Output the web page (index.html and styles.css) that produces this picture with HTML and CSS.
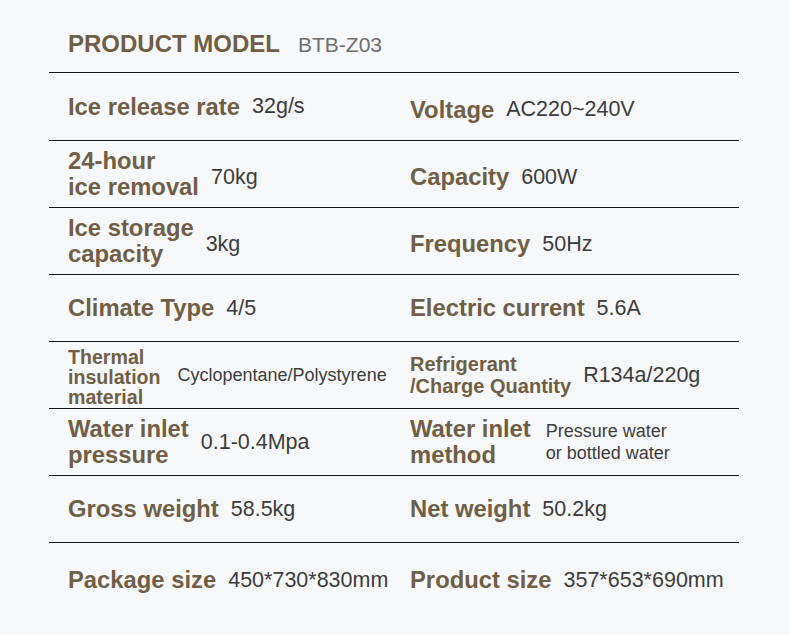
FILE: index.html
```html
<!DOCTYPE html>
<html lang="en">
<head>
<meta charset="utf-8">
<title>Product specifications</title>
<link rel="stylesheet" href="styles.css">
</head>
<body>
<div class="sheet">
  <div class="title">
    <span class="title-label">PRODUCT MODEL</span>
    <span class="title-value">BTB-Z03</span>
  </div>
  <div class="specs">
    <div class="row row-first row-drop">
      <div class="cell"><span class="label">Ice release rate</span><span class="value">32g/s</span></div>
      <div class="cell"><span class="label">Voltage</span><span class="value">AC220~240V</span></div>
    </div>
    <div class="row row-drop row-drop-values">
      <div class="cell"><span class="label">24-hour<br>ice removal</span><span class="value">70kg</span></div>
      <div class="cell"><span class="label">Capacity</span><span class="value">600W</span></div>
    </div>
    <div class="row row-drop row-drop-values">
      <div class="cell"><span class="label">Ice storage<br>capacity</span><span class="value">3kg</span></div>
      <div class="cell"><span class="label">Frequency</span><span class="value">50Hz</span></div>
    </div>
    <div class="row">
      <div class="cell"><span class="label">Climate Type</span><span class="value">4/5</span></div>
      <div class="cell"><span class="label">Electric current</span><span class="value">5.6A</span></div>
    </div>
    <div class="row">
      <div class="cell cell-wide"><span class="label label-sm">Thermal<br>insulation<br>material</span><span class="value value-sm">Cyclopentane/Polystyrene</span></div>
      <div class="cell"><span class="label label-md">Refrigerant<br>/Charge Quantity</span><span class="value">R134a/220g</span></div>
    </div>
    <div class="row">
      <div class="cell"><span class="label">Water inlet<br>pressure</span><span class="value">0.1-0.4Mpa</span></div>
      <div class="cell cell-mid"><span class="label">Water inlet<br>method</span><span class="value value-sm">Pressure water<br>or bottled water</span></div>
    </div>
    <div class="row">
      <div class="cell"><span class="label">Gross weight</span><span class="value">58.5kg</span></div>
      <div class="cell"><span class="label">Net weight</span><span class="value">50.2kg</span></div>
    </div>
    <div class="row">
      <div class="cell"><span class="label">Package size</span><span class="value">450*730*830mm</span></div>
      <div class="cell"><span class="label">Product size</span><span class="value">357*653*690mm</span></div>
    </div>
  </div>
</div>
</body>
</html>
```

FILE: styles.css
```css
html, body {
  margin: 0;
  padding: 0;
  background: #f7f8fa;
}

body {
  font-family: "Liberation Sans", Arial, Helvetica, sans-serif;
  width: 790px;
  height: 635px;
  overflow: hidden;
}

.sheet {
  margin-left: 49px;
  width: 690px;
}

.title {
  box-sizing: border-box;
  height: 73px;
  padding: 30px 0 0 19px;
  border-bottom: 1px solid #151515;
  display: flex;
  align-items: baseline;
  gap: 18px;
}

.title-label {
  font-size: 24px;
  line-height: 27px;
  font-weight: 700;
  color: #705e45;
}

.title-value {
  font-size: 21px;
  color: #6e6e6e;
}

.row {
  box-sizing: border-box;
  height: 67px;
  display: grid;
  grid-template-columns: 361px 1fr;
  border-bottom: 1px solid #151515;
}

.row-first {
  height: 68px;
}

.row:last-child {
  height: 74px;
  border-bottom: none;
}

.cell {
  display: flex;
  align-items: center;
  gap: 12px;
}

.cell:first-child {
  padding-left: 19px;
}

.row-drop .cell:last-child {
  padding-top: 6px;
}

.row-drop-values .cell:first-child .value {
  margin-top: 6px;
}

.cell-wide {
  gap: 17px;
}

.cell-mid {
  gap: 15px;
}

.label {
  font-size: 23.8px;
  line-height: 26px;
  font-weight: 700;
  color: #705e45;
  white-space: nowrap;
}

.label-sm {
  font-size: 19.6px;
  line-height: 20px;
  padding-top: 4px;
}

.label-md {
  font-size: 20px;
  line-height: 22px;
}

.value {
  font-size: 21.5px;
  color: #3c3c3c;
  white-space: nowrap;
}

.value-sm {
  font-size: 18px;
  line-height: 22px;
}
```
